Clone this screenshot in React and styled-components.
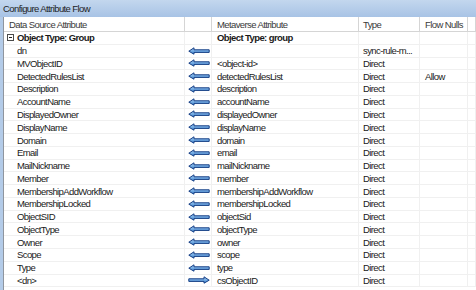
import styled, { createGlobalStyle } from 'styled-components';

const GlobalStyle = createGlobalStyle`
  html, body { margin: 0; padding: 0; background: #fff; }
  body { font-family: "Liberation Sans", Arial, sans-serif; }
`;

const COLS = '181px 27px 147px 61px 48px 1fr';
const ROW_H = 12.77;

const Window = styled.div`
  width: 476px;
  height: 290px;
  overflow: hidden;
  display: flex;
  flex-direction: column;
  background: #b3cbe8;
`;

const TitleBar = styled.div`
  height: 17px;
  flex: none;
  display: flex;
  align-items: center;
  padding-left: 3px;
  font-size: 9.5px;
  letter-spacing: -0.6px;
  color: #1e1e1e;
  background: linear-gradient(#c3d7ee, #a8c3e5);
`;

const Panel = styled.div`
  flex: 1;
  margin-left: 3px;
  border-left: 1px solid #8f959e;
  background: #fff;
  display: flex;
  flex-direction: column;
`;

const Row = styled.div`
  display: grid;
  grid-template-columns: ${COLS};
  height: ${p => (p.$header ? '15px' : `${ROW_H}px`)};
  flex: none;
  box-sizing: border-box;
  border-bottom: 1px solid ${p => (p.$header ? '#d5d5d5' : '#f0f0f0')};
`;

const Cell = styled.div`
  display: flex;
  align-items: center;
  overflow: hidden;
  white-space: nowrap;
  box-sizing: border-box;
  border-right: 1px solid ${p => (p.$header ? '#d5d5d5' : '#f0f0f0')};
  font-size: 9.5px;
  letter-spacing: -0.6px;
  color: ${p => (p.$header ? '#3a3a3a' : '#1a1a1a')};
  font-weight: ${p => (p.$bold ? 700 : 400)};
  padding-left: ${p => p.$pad ?? 4}px;
`;

const Toggle = styled.span`
  width: 7px;
  height: 7px;
  box-sizing: border-box;
  border: 1px solid #4a4a4a;
  margin-right: 3px;
  position: relative;
  flex: none;
  &::after {
    content: '';
    position: absolute;
    left: 1px;
    right: 1px;
    top: 2px;
    height: 1px;
    background: #222;
  }
`;

const Arrow = ({ right }) => (
  <svg width="22" height="8" viewBox="0 0 22 8" style={right ? { transform: 'scaleX(-1)' } : undefined}>
    <defs>
      <linearGradient id="ag" x1="0" y1="0" x2="0" y2="1">
        <stop offset="0" stopColor="#a8d0f5" />
        <stop offset="1" stopColor="#3f86d0" />
      </linearGradient>
    </defs>
    <path
      d="M0.8 4.2 L6 0.8 L6 2.8 L21.2 2.8 L21.2 5.4 L6 5.4 L6 7.2 Z"
      fill="url(#ag)"
      stroke="#163f85"
      strokeWidth="1"
      strokeLinejoin="round"
    />
  </svg>
);

const rows = [
  ['dn', '', 'sync-rule-m...', ''],
  ['MVObjectID', '<object-id>', 'Direct', ''],
  ['DetectedRulesList', 'detectedRulesList', 'Direct', 'Allow'],
  ['Description', 'description', 'Direct', ''],
  ['AccountName', 'accountName', 'Direct', ''],
  ['DisplayedOwner', 'displayedOwner', 'Direct', ''],
  ['DisplayName', 'displayName', 'Direct', ''],
  ['Domain', 'domain', 'Direct', ''],
  ['Email', 'email', 'Direct', ''],
  ['MailNickname', 'mailNickname', 'Direct', ''],
  ['Member', 'member', 'Direct', ''],
  ['MembershipAddWorkflow', 'membershipAddWorkflow', 'Direct', ''],
  ['MembershipLocked', 'membershipLocked', 'Direct', ''],
  ['ObjectSID', 'objectSid', 'Direct', ''],
  ['ObjectType', 'objectType', 'Direct', ''],
  ['Owner', 'owner', 'Direct', ''],
  ['Scope', 'scope', 'Direct', ''],
  ['Type', 'type', 'Direct', ''],
  ['<dn>', 'csObjectID', 'Direct', '', true],
];

export default function App() {
  return (
    <Window>
      <GlobalStyle />
      <TitleBar>Configure Attribute Flow</TitleBar>
      <Panel>
        <Row $header>
          <Cell $header $pad={5}>Data Source Attribute</Cell>
          <Cell $header />
          <Cell $header $pad={5}>Metaverse Attribute</Cell>
          <Cell $header $pad={4}>Type</Cell>
          <Cell $header $pad={5}>Flow Nulls</Cell>
          <Cell $header />
        </Row>
        <Row>
          <Cell $bold $pad={3}><Toggle />Object Type: Group</Cell>
          <Cell />
          <Cell $bold $pad={5}>Object Type: group</Cell>
          <Cell />
          <Cell />
          <Cell />
        </Row>
        {rows.map(([src, mv, type, nulls, right]) => (
          <Row key={src}>
            <Cell $pad={13}>{src}</Cell>
            <Cell $pad={3}><Arrow right={right} /></Cell>
            <Cell $pad={5}>{mv}</Cell>
            <Cell $pad={4}>{type}</Cell>
            <Cell $pad={5}>{nulls}</Cell>
            <Cell />
          </Row>
        ))}
      </Panel>
    </Window>
  );
}
